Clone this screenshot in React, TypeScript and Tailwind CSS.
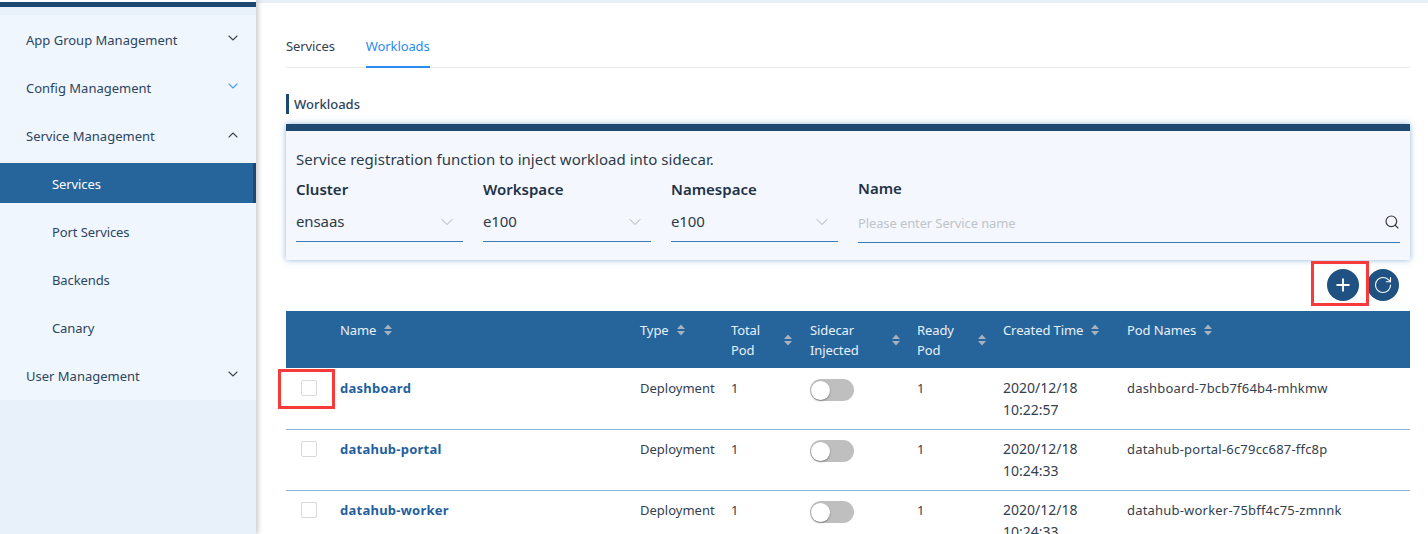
import { ChevronDown, ChevronUp, Plus, RotateCw, Search } from 'lucide-react'

const menu = [
  { label: 'App Group Management', chevron: 'down', color: 'text-[#3c4654]' },
  { label: 'Config Management', chevron: 'down', color: 'text-[#4a9ff0]' },
  { label: 'Service Management', chevron: 'up', color: 'text-[#3c4654]' },
]

const subMenu = ['Services', 'Port Services', 'Backends', 'Canary']

const rows = [
  { name: 'dashboard', created: ['2020/12/18', '10:22:57'], pod: 'dashboard-7bcb7f64b4-mhkmw' },
  { name: 'datahub-portal', created: ['2020/12/18', '10:24:33'], pod: 'datahub-portal-6c79cc687-ffc8p' },
  { name: 'datahub-worker', created: ['2020/12/18', '10:24:33'], pod: 'datahub-worker-75bff4c75-zmnnk' },
]

function SortIcon() {
  return (
    <svg width="8" height="12" viewBox="0 0 8 12" className="shrink-0 fill-[#a6b2bf]">
      <path d="M4 0.5 8 5H0z" />
      <path d="M4 11.5 0 7h8z" />
    </svg>
  )
}

function SideItem({ label, chevron, color }: { label: string; chevron: string; color: string }) {
  return (
    <div className="flex h-12 items-center justify-between pl-[26px] pr-[15px] pt-[2px] text-[13px] text-[#2c4560]">
      <span>{label}</span>
      {chevron === 'up' ? (
        <ChevronUp size={16} strokeWidth={1.6} className={`${color} mb-[4px]`} />
      ) : (
        <ChevronDown size={16} strokeWidth={1.6} className={`${color} mb-[6px]`} />
      )}
    </div>
  )
}

function Sidebar() {
  return (
    <aside className="z-10 flex h-full w-[256px] shrink-0 flex-col bg-[#e8f0f9] shadow-[2px_0_5px_rgba(0,0,0,0.22)]">
      <div className="h-[2px] bg-white" />
      <div className="h-[5px] bg-[#1c4872]" />
      <div className="h-[8px] bg-[#e8f0f9]" />
      <div className="h-[385px] bg-[#f0f6fe] pt-px">
        {menu.map((m) => (
          <SideItem key={m.label} {...m} />
        ))}
        <div className="-mt-[1px] tracking-[-0.1px]">
          {subMenu.map((s, i) =>
            i === 0 ? (
              <div
                key={s}
                className="mb-[5px] mt-[4px] flex h-10 items-center border-r-[3px] border-[#1c4872] bg-[#26659c] pl-[52px] pt-[4px] text-[13px] text-white"
              >
                {s}
              </div>
            ) : (
              <div key={s} className="flex h-12 items-center pl-[52px] pt-[2px] text-[13px] text-[#2c4560]">
                {s}
              </div>
            ),
          )}
        </div>
        <SideItem label="User Management" chevron="down" color="text-[#3c4654]" />
      </div>
    </aside>
  )
}

function FilterSelect({ label, value, width }: { label: string; value: string; width: string }) {
  return (
    <div className={`${width} shrink-0`}>
      <div className="h-[26px] text-[15px] leading-[26px] font-semibold text-[#1f3247]">{label}</div>
      <div className="flex h-[40px] items-center justify-between border-b border-[#3b7cb8] pr-[6px] text-[15px] tracking-[-0.1px] text-[#2d3a48]">
        <span>{value}</span>
        <ChevronDown size={20} strokeWidth={1.1} className="text-[#a4a9ae]" />
      </div>
    </div>
  )
}

function Toggle() {
  return (
    <div className="flex h-[22px] w-[44px] items-center rounded-full bg-[#bfbfbf] pl-px">
      <div className="size-[19px] rounded-full bg-white shadow-[0_1px_2px_rgba(0,0,0,0.35)]" />
    </div>
  )
}

function HeadCell({ lines, pr = 'pr-[11px]' }: { lines: string[]; pr?: string }) {
  const twoLines = lines.length > 1
  return (
    <th className="p-0 pt-[9px] align-top font-normal">
      <div className={`flex ${pr} ${twoLines ? 'items-center justify-between' : 'items-center gap-2'}`}>
        <div className="text-left text-[13px] leading-[20px] tracking-[-0.1px] text-[#e8f0f8]">
          {lines.map((l) => (
            <div key={l}>{l}</div>
          ))}
        </div>
        <SortIcon />
      </div>
    </th>
  )
}

function WorkloadTable() {
  return (
    <table className="w-[1124px] table-fixed border-separate border-spacing-0 text-[13px]">
      <colgroup>
        <col className="w-[54px]" />
        <col className="w-[300px]" />
        <col className="w-[91px]" />
        <col className="w-[79px]" />
        <col className="w-[107px]" />
        <col className="w-[86px]" />
        <col className="w-[124px]" />
        <col />
      </colgroup>
      <thead>
        <tr className="h-[57px] bg-[#26659c]">
          <th className="p-0" />
          <HeadCell lines={['Name']} />
          <HeadCell lines={['Type']} />
          <HeadCell lines={['Total', 'Pod']} pr="pr-[18px]" />
          <HeadCell lines={['Sidecar', 'Injected']} pr="pr-[17px]" />
          <HeadCell lines={['Ready', 'Pod']} pr="pr-[17px]" />
          <HeadCell lines={['Created Time']} />
          <HeadCell lines={['Pod Names']} />
        </tr>
      </thead>
      <tbody>
        {rows.map((r, i) => (
          <tr
            key={r.name}
            className={`h-[61px] align-top text-[#33404e] ${i > 0 ? '[&>td]:shadow-[inset_0_1px_0_#8db5d8]' : ''}`}
          >
            <td className="relative p-0 pl-[15px] pt-[12px]">
              <div className="size-4 rounded-[2px] border border-[#d9d9d9] bg-white" />
              {i === 0 && (
                <div className="absolute left-[-8px] top-[1px] h-[40px] w-[57px] border-[3px] border-[#f73a3a]" />
              )}
            </td>
            <td className="p-0 pt-[10px] leading-[20px] font-bold tracking-[0.25px] text-[#1f5fa0]">{r.name}</td>
            <td className="p-0 pt-[10px] leading-[20px]">Deployment</td>
            <td className="p-0 pt-[10px] leading-[20px]">1</td>
            <td className="p-0 pt-[11px]">
              <Toggle />
            </td>
            <td className="p-0 pt-[10px] leading-[20px]">1</td>
            <td className="p-0 pt-[9px] text-[14px] leading-[22px]">
              <div>{r.created[0]}</div>
              <div>{r.created[1]}</div>
            </td>
            <td className="p-0 pt-[10px] leading-[20px] tracking-[0.2px]">{r.pod}</td>
          </tr>
        ))}
      </tbody>
    </table>
  )
}

export default function App() {
  return (
    <div className="flex h-[534px] w-[1428px] overflow-hidden bg-white font-['Noto_Sans',sans-serif]">
      <Sidebar />
      <main className="relative min-w-0 flex-1">
        <div className="h-[3px] bg-[#e9eff6]" />
        <div className="pl-[30px] pr-[18px]">
          <div className="flex h-[65px] items-end gap-[31px] border-b border-[#e8e8e8] text-[13px] leading-[20px] tracking-[-0.1px]">
            <div className="-mb-px h-[32px] text-[#33404e]">Services</div>
            <div className="-mb-px h-[32px] border-b-2 border-[#2a8cf0] text-[#2a8cf0]">Workloads</div>
          </div>
          <div className="mt-[26px] flex h-[20px] items-center border-l-[3px] border-[#1c4872] pl-[5px] pt-[2px] text-[13px] font-medium text-[#2c4560]">
            Workloads
          </div>
          <section className="mt-[10px] h-[136px] border-t-[7px] border-[#1c4872] bg-[#f4f8fe] pl-[10px] pr-[10px] pt-[18px] shadow-[0_0_6px_rgba(70,130,190,0.6)]">
            <div className="h-[20px] text-[15px] leading-[20px] tracking-[0.03px] text-[#2d3a48]">
              Service registration function to inject workload into sidecar.
            </div>
            <div className="mt-[7px] flex gap-5">
              <FilterSelect label="Cluster" value="ensaas" width="w-[167px]" />
              <FilterSelect label="Workspace" value="e100" width="w-[168px]" />
              <FilterSelect label="Namespace" value="e100" width="w-[167px]" />
              <div className="min-w-0 flex-1">
                <div className="h-[24px] text-[15px] leading-[24px] font-semibold text-[#1f3247]">Name</div>
                <div className="flex h-[43px] items-center justify-between border-b border-[#3b7cb8] pt-[6px] text-[13px] tracking-[-0.12px] text-[#bfc4c9]">
                  <span>Please enter Service name</span>
                  <Search size={16} strokeWidth={1.7} className="mb-[5px] text-[#333]" />
                </div>
              </div>
            </div>
          </section>
          <div className="mt-[9px] flex h-[32px] justify-end gap-[8px] pr-[11px]">
            <div className="relative flex size-8 items-center justify-center rounded-full bg-[#1f5283] text-white">
              <Plus size={20} strokeWidth={2.2} />
              <div className="absolute left-[-16px] top-[-8px] h-[45px] w-[58px] border-[3px] border-[#f73a3a]" />
            </div>
            <div className="flex size-8 items-center justify-center rounded-full bg-[#1f5283] text-white">
              <RotateCw size={20} strokeWidth={1.3} />
            </div>
          </div>
          <div className="mt-[10px]">
            <WorkloadTable />
          </div>
        </div>
      </main>
    </div>
  )
}
